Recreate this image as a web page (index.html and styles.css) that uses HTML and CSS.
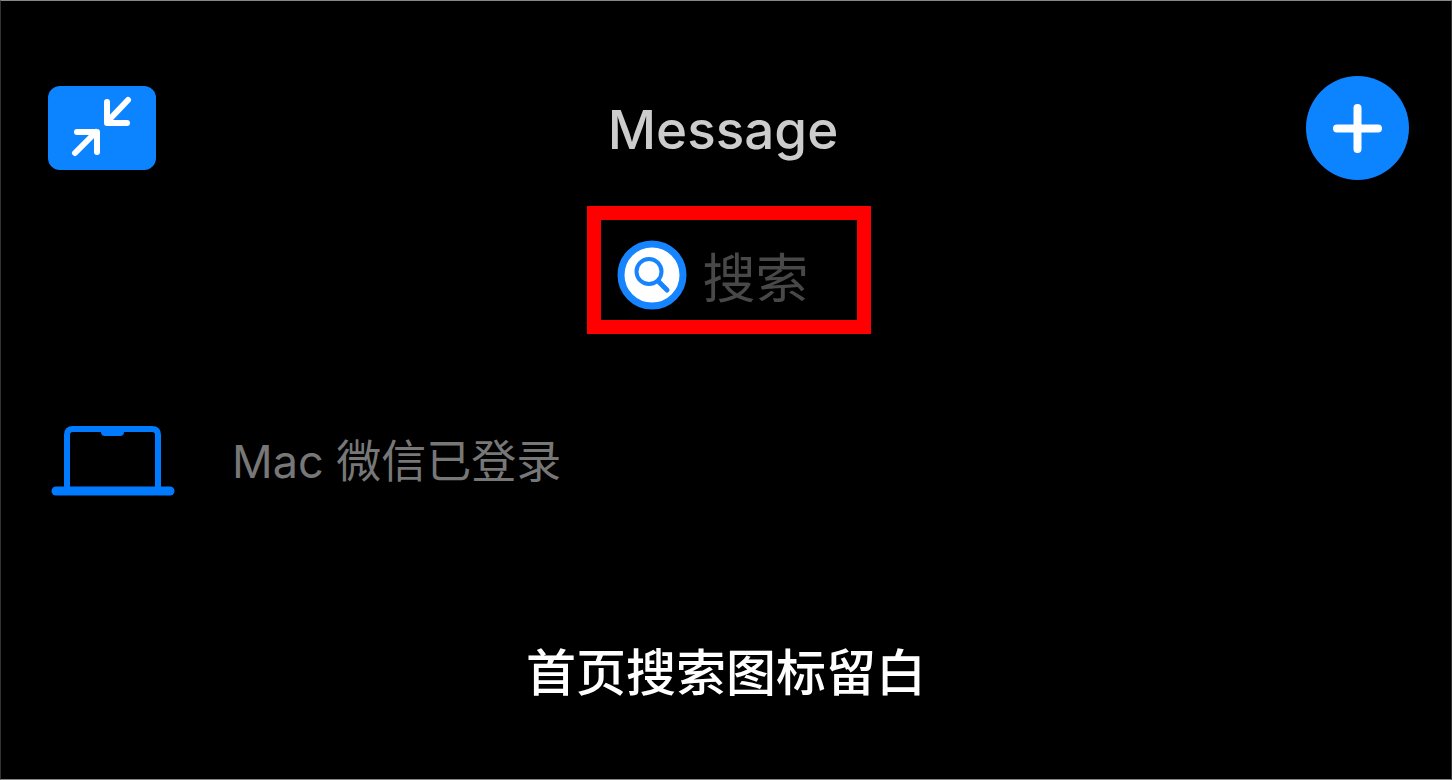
FILE: index.html
```html
<!DOCTYPE html>
<html lang="zh-CN">
<head>
<meta charset="utf-8">
<meta name="viewport" content="width=device-width, initial-scale=1">
<title>Message</title>
<link rel="stylesheet" href="styles.css">
</head>
<body>
<main class="screen">
  <header class="topbar">
    <button class="collapse" type="button" aria-label="Collapse">
      <svg width="108" height="84" viewBox="0 0 108 84" fill="none" stroke="#fff" stroke-width="6" stroke-linecap="round" stroke-linejoin="round" aria-hidden="true">
        <path d="M80 14 60 35M59 16V37H79M27 67 48 46M29 46H49V66"/>
      </svg>
    </button>
    <h1 class="title">Message</h1>
    <button class="add" type="button" aria-label="Add">
      <svg width="103" height="104" viewBox="0 0 103 104" fill="none" stroke="#fff" stroke-width="8" stroke-linecap="round" aria-hidden="true">
        <path d="M51.500 32V73M31 52.500H72"/>
      </svg>
    </button>
  </header>

  <label class="search">
    <svg class="search-icon" width="70" height="70" viewBox="0 0 70 70" fill="none" stroke="#1684ff" aria-label="搜索" role="img">
      <circle cx="35" cy="35" r="31" fill="#fff" stroke-width="7"/>
      <circle cx="32" cy="31.500" r="12.500" stroke-width="4"/>
      <path d="M41 41 50 50" stroke-width="5" stroke-linecap="round"/>
    </svg>
    <input class="search-input" type="search" placeholder="搜索">
  </label>

  <section class="device">
    <svg width="124" height="72" viewBox="0 0 124 72" fill="none" stroke="#007aff" aria-hidden="true">
      <path d="M16 64V11Q16 5 22 5H101Q107 5 107 11V64" stroke-width="6"/>
      <path d="M50 5H73V8Q73 12 69 12H54Q50 12 50 8Z" fill="#007aff" stroke="none"/>
      <path d="M5 67H119" stroke-width="9" stroke-linecap="round"/>
    </svg>
    <span class="device-text">Mac 微信已登录</span>
  </section>

  <p class="caption">首页搜索图标留白</p>
</main>
</body>
</html>
```
FILE: styles.css
```css
* {
  box-sizing: border-box;
}

body {
  margin: 0;
  background: #000;
  font-family: Inter, "Noto Sans CJK SC", sans-serif;
}

.screen {
  display: flex;
  flex-direction: column;
  min-height: 100vh;
  padding: 75px 42px 0;
  border: 1px solid #333;
  border-top-color: #888;
  border-bottom-color: #888;
  background: #000;
}

.topbar {
  display: grid;
  grid-template-columns: 1fr auto 1fr;
  align-items: center;
}

.collapse,
.add {
  padding: 0;
  border: 0;
  background: #0d84ff;
  cursor: pointer;
}

.collapse svg,
.add svg {
  display: block;
}

.collapse {
  justify-self: start;
  margin-left: 5px;
  border-radius: 12px;
}

.add {
  justify-self: end;
  border-radius: 50%;
}

.title {
  margin: 0;
  padding-top: 4px;
  padding-right: 6px;
  color: #ccc;
  font-size: 53px;
  font-weight: 500;
  line-height: 64px;
}

.search {
  display: flex;
  align-items: center;
  align-self: center;
  gap: 16px;
  width: 284px;
  height: 128px;
  margin-top: 26px;
  margin-left: 5px;
  padding: 10px 16px 0;
  border: 14px solid #f00;
}

.search-icon {
  flex: none;
}

.search-input {
  flex: 1;
  min-width: 0;
  padding: 0;
  border: 0;
  outline: 0;
  background: transparent;
  color: #ccc;
  font-family: "Noto Sans CJK SC", sans-serif;
  font-size: 53px;
  line-height: 76px;
}

.search-input::placeholder {
  color: #484848;
  opacity: 1;
}

.device {
  display: flex;
  align-items: center;
  gap: 57px;
  margin-top: 90px;
  margin-left: 8px;
  color: #777;
  font-size: 45px;
  line-height: 68px;
}

.device-text {
  padding-top: 4px;
}

.caption {
  margin: 135px 0 0;
  color: #fff;
  font-family: "Noto Sans CJK SC", sans-serif;
  font-size: 50px;
  font-weight: 500;
  line-height: 76px;
  text-align: center;
}
```
